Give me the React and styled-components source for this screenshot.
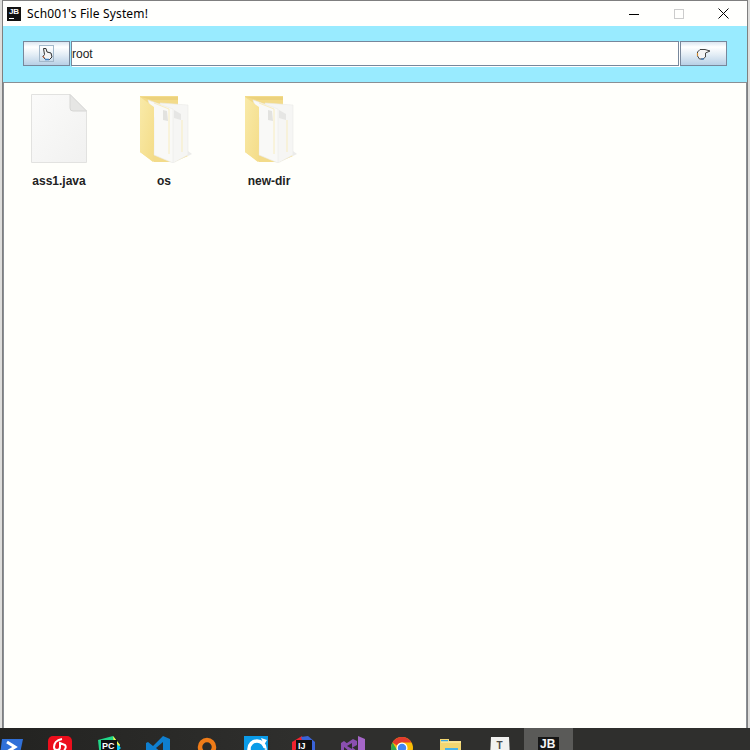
import React from 'react';
import styled, { createGlobalStyle } from 'styled-components';

const GlobalStyle = createGlobalStyle`
  html, body {
    margin: 0;
    padding: 0;
    height: 750px;
    overflow: hidden;
    background: #dededc;
  }
`;

const Screen = styled.div`
  width: 750px;
  height: 750px;
  display: flex;
  flex-direction: column;
  font-family: "Liberation Sans", Arial, sans-serif;
`;

const Desktop = styled.div`
  height: 728px;
  flex: none;
  padding: 0 2px;
  box-sizing: border-box;
`;

const Window = styled.div`
  height: 728px;
  display: flex;
  flex-direction: column;
  background: #fffffb;
  border: 1px solid #7f7f7f;
  border-bottom: 0;
  box-sizing: border-box;
`;

const TitleBar = styled.div`
  height: 25px;
  flex: none;
  display: flex;
  align-items: center;
  background: #fffffd;
  padding-left: 4px;
`;

const AppBadge = styled.div`
  width: 14px;
  height: 14px;
  background: #111;
  color: #fff;
  font-size: 8px;
  font-weight: 700;
  line-height: 9px;
  text-align: center;
  position: relative;
  &::after {
    content: '';
    position: absolute;
    left: 2px;
    bottom: 2px;
    width: 5px;
    height: 1px;
    background: #fff;
  }
`;

const Title = styled.div`
  margin-left: 6px;
  font-family: "Noto Sans", sans-serif;
  font-size: 12px;
  letter-spacing: 0.15px;
  color: #000;
  flex: 1;
`;

const Caption = styled.div`
  display: flex;
  align-items: center;
  padding-right: 1px;
`;

const CaptionButton = styled.div`
  width: 45px;
  height: 25px;
  display: flex;
  align-items: center;
  justify-content: center;
`;

const Toolbar = styled.div`
  height: 56px;
  flex: none;
  background: #99ebff;
  display: flex;
  align-items: center;
  padding: 0 20px 1px 20px;
  box-sizing: border-box;
`;

const GradientButton = styled.button`
  width: ${(p) => p.$width}px;
  height: 25px;
  padding: 0;
  box-sizing: border-box;
  flex: none;
  border: 1px solid #77879b;
  background: linear-gradient(#dbe6f1 0%, #ffffff 22%, #e3edf5 55%, #b8d0e6 100%);
  display: flex;
  align-items: center;
  justify-content: center;
`;

const IconFrame = styled.div`
  width: 15px;
  height: 17px;
  box-sizing: border-box;
  border: 1px solid #a3b8ca;
  display: flex;
  align-items: center;
  justify-content: center;
`;

const PathField = styled.div`
  flex: 1;
  height: 25px;
  box-sizing: border-box;
  margin: 0 1px;
  border: 1px solid #77879b;
  background: #fffffd;
  box-shadow: 1px 1px 0 #fff;
  font-size: 12px;
  line-height: 24px;
  padding-left: 0;
  color: #222;
`;

const Content = styled.div`
  flex: 1;
  border: 1px solid #8a8f94;
  border-bottom: 0;
  background: #fffffb;
  display: flex;
  align-items: flex-start;
  padding-top: 9px;
`;

const FileItem = styled.div`
  width: 64px;
  margin-left: ${(p) => p.$offset}px;
  display: flex;
  flex-direction: column;
  align-items: center;
`;

const IconSlot = styled.div`
  width: 64px;
  height: 72px;
  display: flex;
  align-items: center;
  justify-content: center;
`;

const FolderSvg = styled.svg`
  margin-left: 4px;
`;

const FileName = styled.div`
  margin-top: 10px;
  font-size: 12px;
  font-weight: 700;
  color: #222;
  line-height: 14px;
`;

const Taskbar = styled.div`
  height: 22px;
  flex: none;
  background: linear-gradient(90deg, #232321, #2f2f2d 40%);
  overflow: hidden;
`;

const TaskRow = styled.div`
  display: flex;
  margin-left: -13.35px;
`;

const TaskSlot = styled.div`
  width: 48.9px;
  height: 22px;
  flex: none;
  display: flex;
  justify-content: center;
  align-items: flex-start;
  padding-top: ${(p) => p.$top}px;
  box-sizing: border-box;
  background: ${(p) => (p.$active ? '#5a5a58' : 'transparent')};
`;

const DocIcon = () => (
  <svg width="56" height="70" viewBox="0 0 56 70">
    <defs>
      <linearGradient id="paper" x1="0" y1="0" x2="1" y2="1">
        <stop offset="0" stopColor="#fbfbfa" />
        <stop offset="1" stopColor="#f1f1f0" />
      </linearGradient>
    </defs>
    <path d="M0.5 1.5H39L55.5 18V69.5H0.5Z" fill="url(#paper)" stroke="#e2e2e0" />
    <path d="M39 1.5L55.5 18H42Q39 18 39 15Z" fill="#e6e6e4" stroke="#d6d6d4" />
  </svg>
);

const FolderIcon = ({ id }) => (
  <FolderSvg width="52" height="70" viewBox="0 0 52 70">
    <defs>
      <linearGradient id={id} x1="0" y1="0" x2="1" y2="1">
        <stop offset="0" stopColor="#f9eaa8" />
        <stop offset="1" stopColor="#f4dc88" />
      </linearGradient>
    </defs>
    <g transform="translate(0 3)">
      <path d="M0 0H38V52L48 60L34 66H14L0 56Z" fill="#f3db8a" />
      <path d="M1 1H38V4L12 4Z" fill="#ecd27c" />
      <path d="M20 7L48 9V59L33 67L26 60Z" fill="#f6f6f4" stroke="#ebebe7" strokeWidth="0.6" />
      <path d="M34 14L41 18V24L34 22Z" fill="#e6e6e4" />
      <path d="M42 24V56" stroke="#f8edc0" fill="none" />
      <path d="M8 4L33 13V67L14 59V22Z" fill="#f9f9f7" stroke="#ebebe7" strokeWidth="0.6" />
      <path d="M23 14L27 15L28 25L23 24Z" fill="#e2e2df" />
      <path d="M14 7L29 13V58" stroke="#f8edc0" fill="none" />
      <path d="M0 1L14 11V48L13 66L0 56Z" fill={`url(#${id})`} />
      <path d="M48 55L52 58L48 60Z" fill="#ececea" />
    </g>
  </FolderSvg>
);

const HandLeft = () => (
  <svg width="12" height="14" viewBox="0 0 12 14">
    <path d="M2.5 1.5H5L6 5L10 6L11 10L8.5 12.5H4.5L2 9.5L3.5 7.5Z" fill="#f4f4f4" stroke="#333" />
    <path d="M4 12.5H8" stroke="#3f7fc0" strokeWidth="1.5" />
    <path d="M2 9L3 11" stroke="#c05a30" />
  </svg>
);

const HandRight = () => (
  <svg width="15" height="12" viewBox="0 0 15 12">
    <path d="M4 1.5H9L14 3L9.5 5V9L7 11H3.5L1.5 8V4Z" fill="#f4f4f4" stroke="#444" />
    <path d="M1.5 5V8" stroke="#d08a30" strokeWidth="1.2" />
    <path d="M5 11H8" stroke="#3f7fc0" strokeWidth="1.2" />
  </svg>
);

const ArrowIcon = () => (
  <svg width="24" height="24" viewBox="0 0 24 24">
    <path d="M3 0H24L19 24H0Z" fill="#3070d8" />
    <path d="M8 3L16 8L8 13" stroke="#fff" strokeWidth="3" fill="none" />
  </svg>
);

const NeteaseIcon = () => (
  <svg width="24" height="24" viewBox="0 0 24 24">
    <rect width="24" height="24" rx="5" fill="#ec0e1c" />
    <path d="M14 3C8 4 6 8 6 11C6 15 12 15 12 11V7L17 9C19 12 16 14 16 14" stroke="#fff" strokeWidth="2" fill="none" />
  </svg>
);

const PyCharmIcon = () => (
  <svg width="24" height="24" viewBox="0 0 24 24">
    <path d="M1 4L16 0L23 9L20 22H3Z" fill="#21d789" />
    <path d="M16 0L23 9L18 14Z" fill="#fcf84a" />
    <path d="M20 8L24 12L19 17Z" fill="#07c3f2" />
    <rect x="4" y="4" width="16" height="16" fill="#111" />
    <text x="5" y="12.5" fontFamily="Liberation Sans, sans-serif" fontSize="9" fontWeight="700" fill="#fff">PC</text>
  </svg>
);

const VsCodeIcon = () => (
  <svg width="24" height="24" viewBox="0 0 24 24">
    <path d="M17 0L24 3V21L17 24L7 14L2 18L0 17V7L2 6L7 10Z" fill="#0f7fd0" />
    <path d="M17 6L10 12L17 18Z" fill="#2b2b2b" />
  </svg>
);

const RingIcon = () => (
  <svg width="20" height="20" viewBox="0 0 20 20">
    <circle cx="10" cy="10" r="7" fill="none" stroke="#f07c18" strokeWidth="4.5" />
  </svg>
);

const BlueSquareIcon = () => (
  <svg width="24" height="24" viewBox="0 0 24 24">
    <rect width="24" height="24" fill="#0a9be8" />
    <circle cx="13" cy="13" r="8" fill="none" stroke="#fff" strokeWidth="3.5" />
    <path d="M17 2L23 4L20 9Z" fill="#fff" />
    <path d="M13 9L22 13L13 18Z" fill="#0a9be8" />
  </svg>
);

const IdeaIcon = () => (
  <svg width="24" height="24" viewBox="0 0 24 24">
    <path d="M0 6L10 0L12 8L0 16Z" fill="#f0222e" />
    <path d="M9 1L16 0L23 6L23 20L12 10Z" fill="#3a63d8" />
    <path d="M0 16L6 22L12 12Z" fill="#f97a12" />
    <rect x="4" y="4" width="16" height="16" fill="#111" />
    <text x="6" y="12.5" fontFamily="Liberation Sans, sans-serif" fontSize="9" fontWeight="700" fill="#fff">IJ</text>
  </svg>
);

const VisualStudioIcon = () => (
  <svg width="24" height="24" viewBox="0 0 24 24">
    <path d="M17 0L24 3V21L17 24Z" fill="#a566c8" />
    <path d="M0 7L3 5L16 15V19L12 18L3 11V19L0 17Z" fill="#8a4fb0" />
    <path d="M3 9L12 3L16 5V9L7 14Z" fill="#8a4fb0" />
    <path d="M6 10L11 7V13Z" fill="#2d2d2b" />
  </svg>
);

const ChromeIcon = () => (
  <svg width="22" height="22" viewBox="0 0 22 22">
    <circle cx="11" cy="11" r="11" fill="#fbbc05" />
    <path d="M11 0A11 11 0 0 1 20.5 5.5H11A5.5 5.5 0 0 0 6 8.5L1.5 5.5A11 11 0 0 1 11 0Z" fill="#e33b2e" />
    <path d="M0 11A11 11 0 0 1 1.5 5.5L7 14.5L11 22A11 11 0 0 1 0 11Z" fill="#2fa84f" />
    <circle cx="11" cy="11" r="5.5" fill="#fff" />
    <circle cx="11" cy="11" r="4.2" fill="#4285f4" />
  </svg>
);

const ExplorerIcon = () => (
  <svg width="22" height="22" viewBox="0 0 22 22">
    <path d="M0 0H9V2H21V22H0Z" fill="#f2d670" />
    <rect x="1" y="1" width="7" height="1.5" fill="#37a5e0" />
    <path d="M1 3H21" stroke="#fff3b8" />
    <rect x="5" y="9" width="13" height="4" fill="#47b4ea" />
  </svg>
);

const TypeIcon = () => (
  <svg width="22" height="22" viewBox="0 0 22 22">
    <path d="M2 0H20L21 20H1Z" fill="#f2f2f0" />
    <text x="7.5" y="12" fontFamily="Liberation Sans, sans-serif" fontSize="10" fontWeight="700" fill="#4a4a4a">T</text>
  </svg>
);

const JbIcon = () => (
  <svg width="21" height="21" viewBox="0 0 21 21">
    <rect width="21" height="21" fill="#161616" />
    <text x="2" y="11" fontFamily="Liberation Sans, sans-serif" fontSize="12" fontWeight="700" fill="#f4f4f4">JB</text>
  </svg>
);

const taskIcons = [
  { key: 'arrow', top: 11, icon: <ArrowIcon /> },
  { key: 'netease', top: 8, icon: <NeteaseIcon /> },
  { key: 'pycharm', top: 8, icon: <PyCharmIcon /> },
  { key: 'vscode', top: 8, icon: <VsCodeIcon /> },
  { key: 'ring', top: 9, icon: <RingIcon /> },
  { key: 'blue', top: 8, icon: <BlueSquareIcon /> },
  { key: 'idea', top: 8, icon: <IdeaIcon /> },
  { key: 'vs', top: 8, icon: <VisualStudioIcon /> },
  { key: 'chrome', top: 9, icon: <ChromeIcon /> },
  { key: 'explorer', top: 11, icon: <ExplorerIcon /> },
  { key: 'type', top: 9, icon: <TypeIcon /> },
  { key: 'jb', top: 9, active: true, icon: <JbIcon /> },
];

const App = () => (
  <Screen>
    <GlobalStyle />
    <Desktop>
      <Window>
        <TitleBar>
          <AppBadge>JB</AppBadge>
          <Title>Sch001's File System!</Title>
          <Caption>
            <CaptionButton>
              <svg width="10" height="10"><path d="M0 5.5H10" stroke="#000" /></svg>
            </CaptionButton>
            <CaptionButton>
              <svg width="10" height="10"><rect x="0.5" y="0.5" width="9" height="9" fill="none" stroke="#ccc" /></svg>
            </CaptionButton>
            <CaptionButton>
              <svg width="11" height="11"><path d="M0.5 0.5L10.5 10.5M10.5 0.5L0.5 10.5" stroke="#000" /></svg>
            </CaptionButton>
          </Caption>
        </TitleBar>
        <Toolbar>
          <GradientButton $width={47}>
            <IconFrame><HandLeft /></IconFrame>
          </GradientButton>
          <PathField>root</PathField>
          <GradientButton $width={47}>
            <HandRight />
          </GradientButton>
        </Toolbar>
        <Content>
          <FileItem $offset={23}>
            <IconSlot><DocIcon /></IconSlot>
            <FileName>ass1.java</FileName>
          </FileItem>
          <FileItem $offset={41}>
            <IconSlot><FolderIcon id="folderA" /></IconSlot>
            <FileName>os</FileName>
          </FileItem>
          <FileItem $offset={41}>
            <IconSlot><FolderIcon id="folderB" /></IconSlot>
            <FileName>new-dir</FileName>
          </FileItem>
        </Content>
      </Window>
    </Desktop>
    <Taskbar>
      <TaskRow>
        {taskIcons.map((t) => (
          <TaskSlot key={t.key} $top={t.top} $active={t.active}>{t.icon}</TaskSlot>
        ))}
      </TaskRow>
    </Taskbar>
  </Screen>
);

export default App;
